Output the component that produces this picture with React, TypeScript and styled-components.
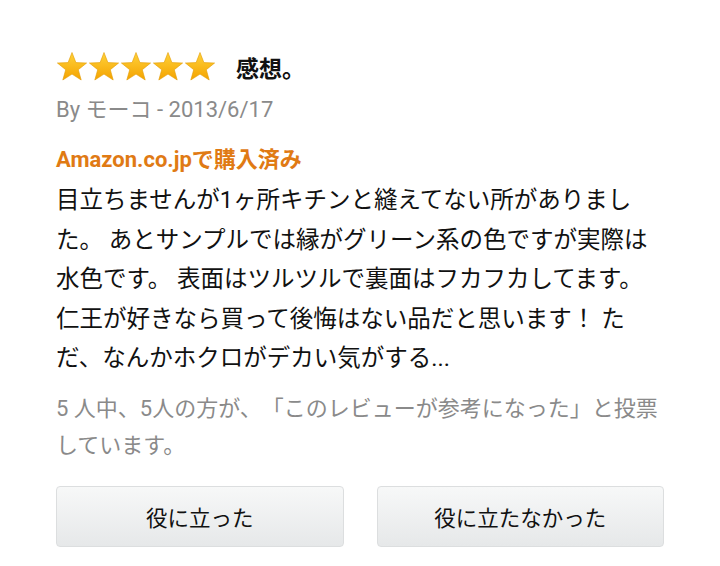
import React from "react";
import styled, { createGlobalStyle } from "styled-components";

const GlobalStyle = createGlobalStyle`
  html, body {
    margin: 0;
    padding: 0;
    background: #ffffff;
  }
  body {
    font-family: Roboto, "Noto Sans CJK JP", sans-serif;
    color: #111;
    text-spacing-trim: space-all;
  }
`;

const Page = styled.div`
  width: 720px;
  height: 566px;
  box-sizing: border-box;
  padding: 48px 56px 0 56px;
  display: flex;
  flex-direction: column;
`;

const TitleRow = styled.div`
  display: flex;
  align-items: center;
  gap: 20px;
  height: 38px;
`;

const Stars = styled.div`
  display: flex;
`;

const Title = styled.div`
  font-size: 23px;
  font-weight: 700;
  color: #111;
`;

const Byline = styled.div`
  margin-top: 10px;
  font-size: 22px;
  color: #8a8a8a;
  line-height: 28px;
`;

const Purchased = styled.div`
  margin-top: 23px;
  font-size: 22px;
  font-weight: 700;
  color: #e07a14;
  line-height: 26px;
`;

const Body = styled.p`
  margin: 8px 0 0 0;
  font-size: 23.5px;
  line-height: 39.5px;
  color: #111;
`;

const Votes = styled.p`
  margin: 11px 0 0 0;
  font-size: 22px;
  line-height: 37px;
  color: #8a8a8a;
`;

const Buttons = styled.div`
  margin-top: 22px;
  display: grid;
  grid-template-columns: 1fr 1fr;
  gap: 33px;
`;

const Button = styled.button`
  height: 61px;
  border: 1px solid #dcdedf;
  border-radius: 4px;
  background: linear-gradient(#f7f8f8, #e6e8e9);
  font-family: Roboto, "Noto Sans CJK JP", sans-serif;
  font-size: 21.5px;
  color: #111;
  padding: 0;
`;

const Star: React.FC = () => (
  <svg width="32" height="32" viewBox="0 0 32 32">
    <defs>
      <linearGradient id="starGrad" x1="0" y1="0" x2="0" y2="1">
        <stop offset="0" stopColor="#ffd23a" />
        <stop offset="1" stopColor="#f4a300" />
      </linearGradient>
    </defs>
    <path
      d="M16 1.5 L19.9 11.6 L30.6 12 L22.3 18.7 L25.2 29 L16 23.1 L6.8 29 L9.7 18.7 L1.4 12 L12.1 11.6 Z"
      fill="url(#starGrad)"
      stroke="#e39a00"
      strokeWidth="0.6"
    />
  </svg>
);

const App: React.FC = () => (
  <>
    <GlobalStyle />
    <Page>
      <TitleRow>
        <Stars>
          {[0, 1, 2, 3, 4].map(i => (
            <Star key={i} />
          ))}
        </Stars>
        <Title>感想。</Title>
      </TitleRow>
      <Byline>By モーコ - 2013/6/17</Byline>
      <Purchased>Amazon.co.jpで購入済み</Purchased>
      <Body>
        目立ちませんが1ヶ所キチンと縫えてない所がありました。
        あとサンプルでは縁がグリーン系の色ですが実際は水色です。
        表面はツルツルで裏面はフカフカしてます。
        仁王が好きなら買って後悔はない品だと思います！
        ただ、なんかホクロがデカい気がする...
      </Body>
      <Votes>5 人中、5人の方が、「このレビューが参考になった」と投票しています。</Votes>
      <Buttons>
        <Button>役に立った</Button>
        <Button>役に立たなかった</Button>
      </Buttons>
    </Page>
  </>
);

export default App;
